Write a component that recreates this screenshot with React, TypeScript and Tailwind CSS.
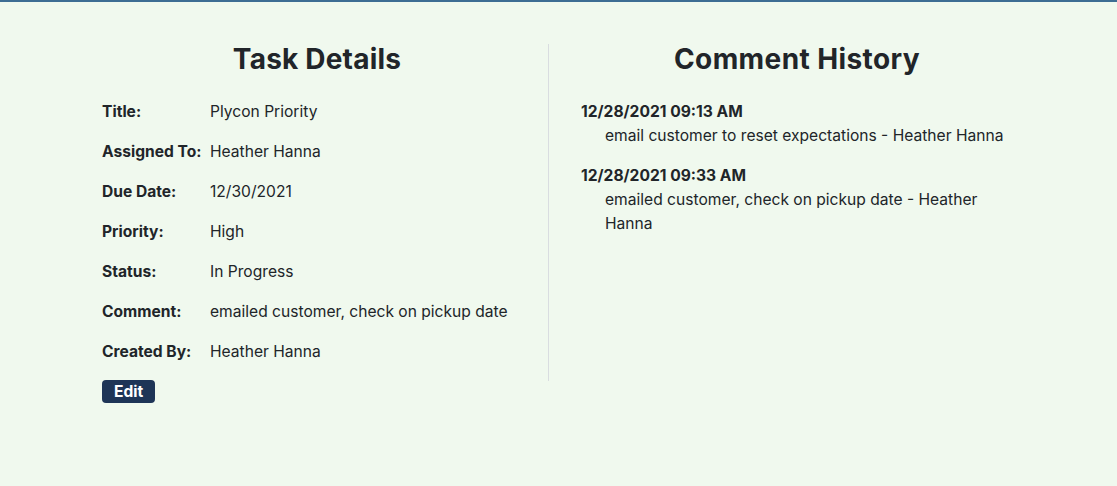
import React from 'react';

const details: [string, string][] = [
  ['Title:', 'Plycon Priority'],
  ['Assigned To:', 'Heather Hanna'],
  ['Due Date:', '12/30/2021'],
  ['Priority:', 'High'],
  ['Status:', 'In Progress'],
  ['Comment:', 'emailed customer, check on pickup date'],
  ['Created By:', 'Heather Hanna'],
];

const history = [
  { date: '12/28/2021 09:13 AM', text: 'email customer to reset expectations - Heather Hanna' },
  { date: '12/28/2021 09:33 AM', text: 'emailed customer, check on pickup date - Heather Hanna' },
];

export default function App() {
  return (
    <div
      className="min-h-[486px] w-full bg-[#f0f9ee] text-[#212529] border-t-2 border-[#3d6d93]"
      style={{ fontFamily: 'Inter, "Noto Sans", sans-serif' }}
    >
      <div className="flex pt-[40px] pl-[86px]">
        {/* Task details */}
        <div className="w-[462px] px-4">
          <h2 className="text-[28px] font-bold text-center leading-[34px] mb-[24px] tracking-[0.2px]">Task Details</h2>
          <div className="flex flex-col gap-[16px]">
            {details.map(([label, value]) => (
              <div key={label} className="flex text-[15.6px] leading-[24px]">
                <span className="w-[108px] shrink-0 font-bold">{label}</span>
                <span>{value}</span>
              </div>
            ))}
          </div>
          <button className="mt-[16px] bg-[#1e3557] text-white text-[15.6px] font-bold leading-[23px] px-[12px] rounded-[4px]">
            Edit
          </button>
        </div>

        <div className="w-px h-[337px] mt-[2px] bg-[#d9dde0]" />

        {/* Comment history */}
        <div className="w-[500px] pl-[32px] pr-[30px]">
          <h2 className="text-[28px] font-bold text-center leading-[34px] mb-[24px] pr-[6px] tracking-[0.4px]">Comment History</h2>
          <div className="flex flex-col gap-[16px]">
            {history.map((h) => (
              <div key={h.date} className="text-[15.6px] leading-[24px]">
                <div className="font-bold">{h.date}</div>
                <div className="pl-[24px]">{h.text}</div>
              </div>
            ))}
          </div>
        </div>
      </div>
    </div>
  );
}
